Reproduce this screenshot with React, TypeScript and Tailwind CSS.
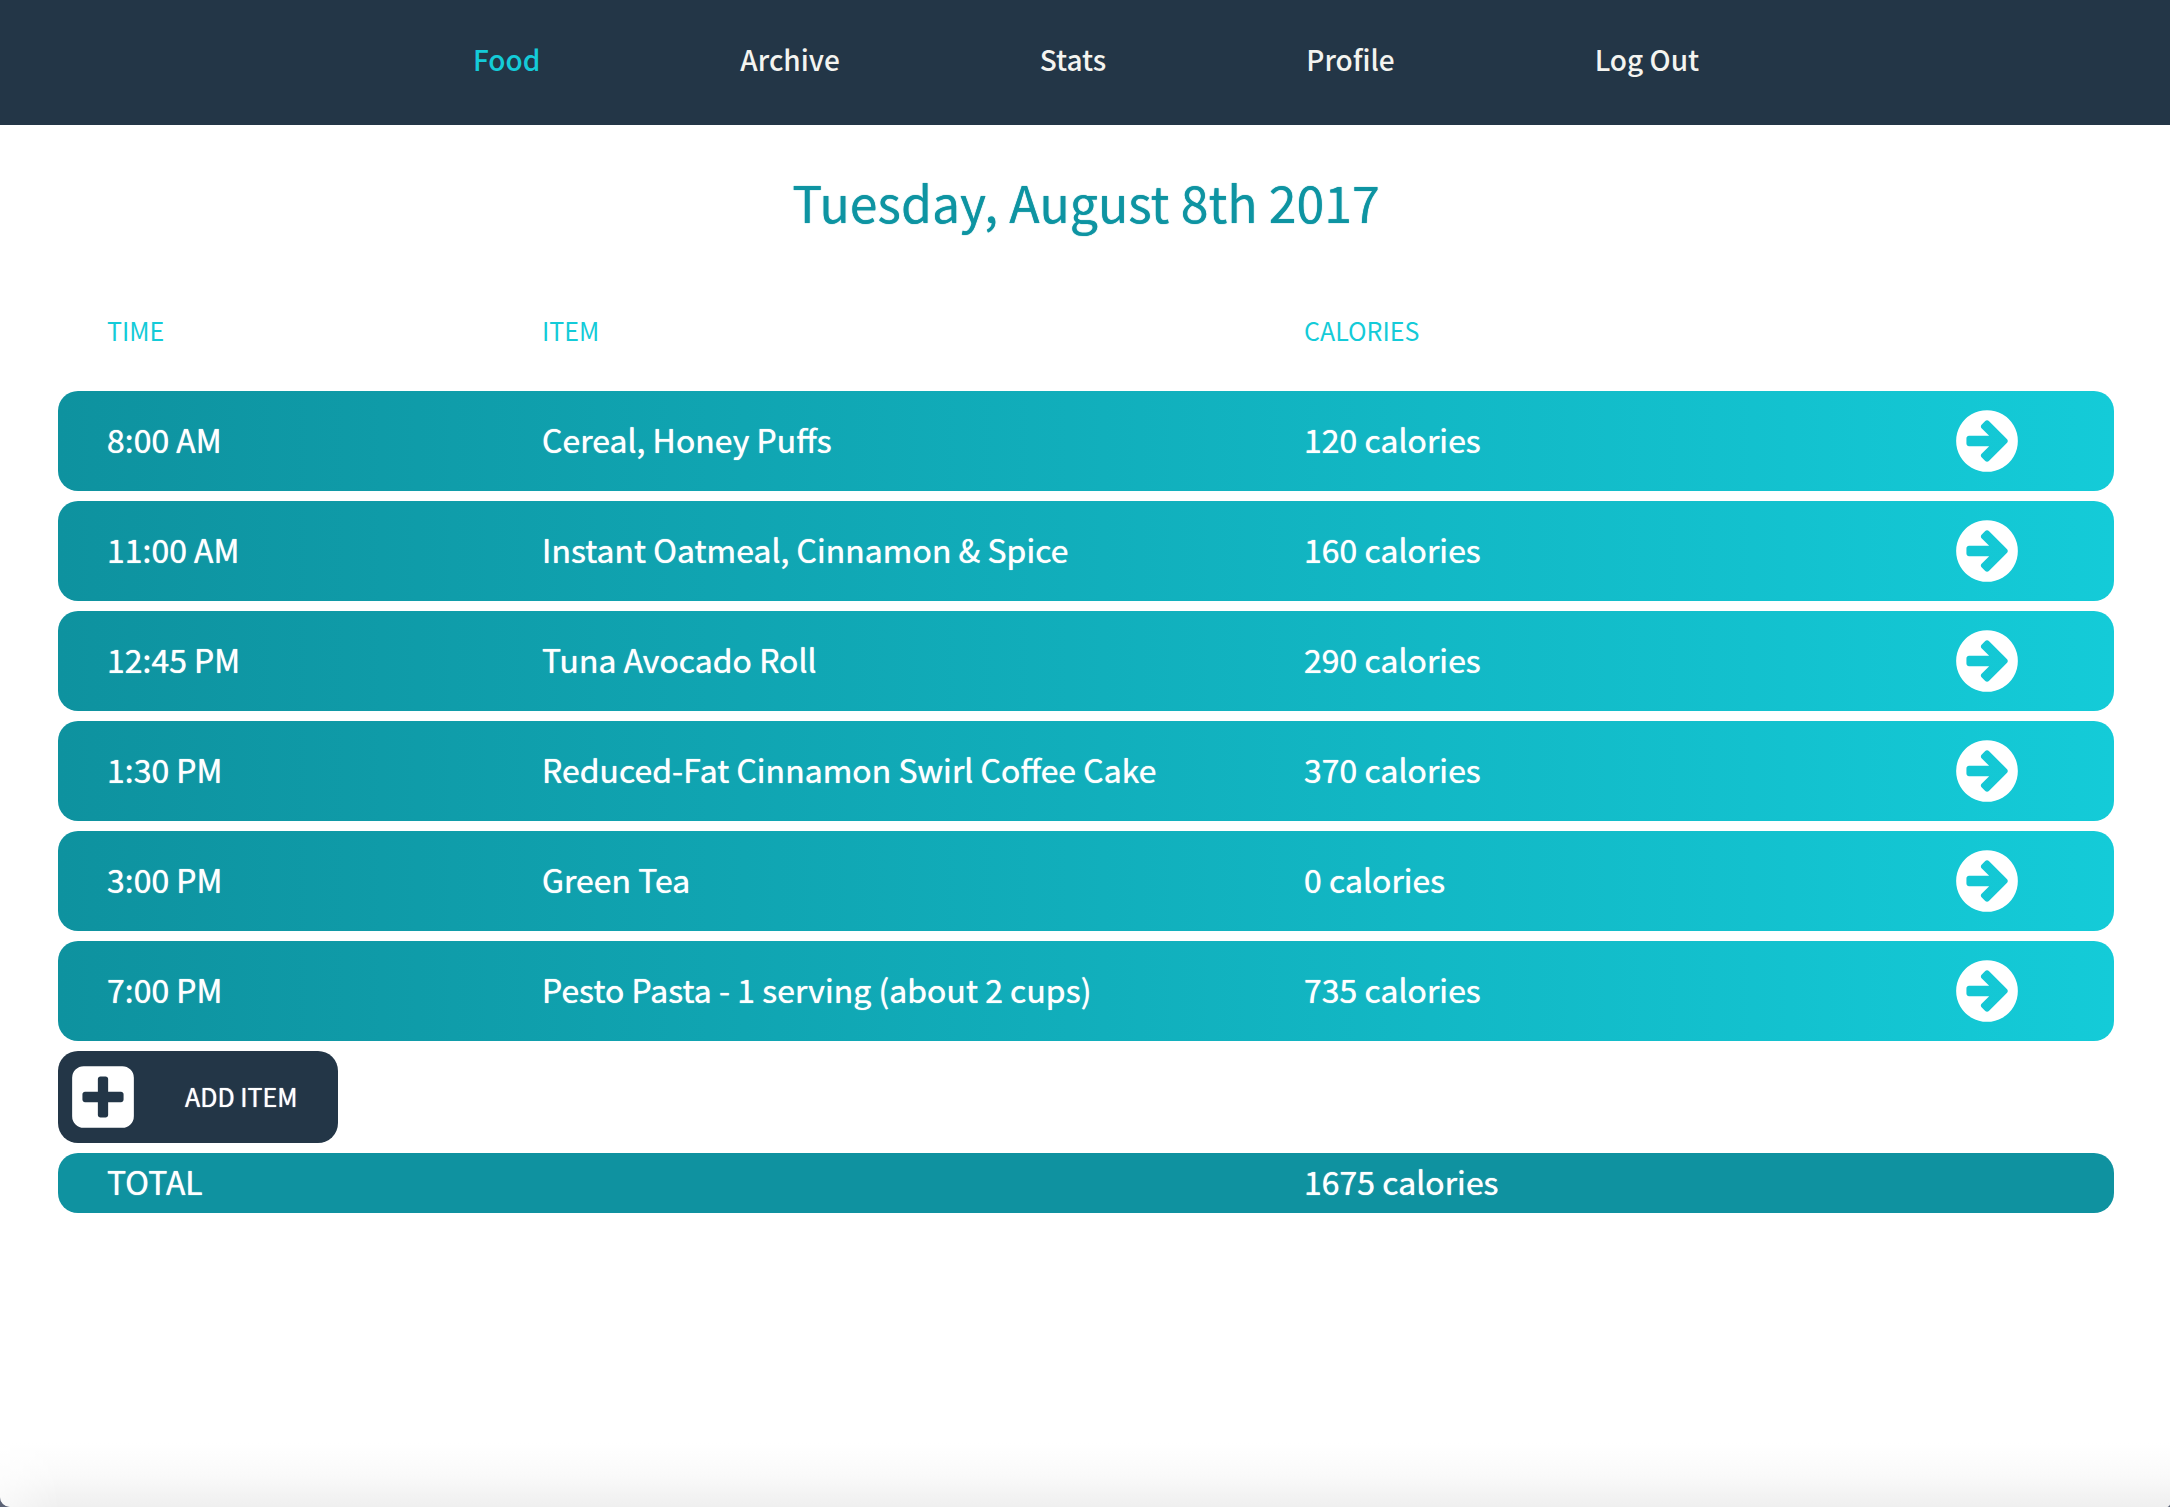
const navLinks = ['Food', 'Archive', 'Stats', 'Profile', 'Log Out'];

const entries = [
  { time: '8:00 AM', item: 'Cereal, Honey Puffs', calories: 120 },
  { time: '11:00 AM', item: 'Instant Oatmeal, Cinnamon & Spice', calories: 160 },
  { time: '12:45 PM', item: 'Tuna Avocado Roll', calories: 290 },
  { time: '1:30 PM', item: 'Reduced-Fat Cinnamon Swirl Coffee Cake', calories: 370 },
  { time: '3:00 PM', item: 'Green Tea', calories: 0 },
  { time: '7:00 PM', item: 'Pesto Pasta - 1 serving (about 2 cups)', calories: 735 },
];

const rowGrid = 'grid grid-cols-[435fr_762fr_647fr_163fr] items-center pl-[49px]';

function ArrowCircleIcon() {
  return (
    <svg viewBox="0 0 1792 1792" className="size-[72px]" fill="currentColor" aria-hidden="true">
      <path d="M1413 896q0-27-18-45l-91-91-362-362q-18-18-45-18t-45 18l-91 91q-18 18-18 45t18 45l189 189h-502q-26 0-45 19t-19 45v128q0 26 19 45t45 19h502l-189 189q-19 19-19 45t19 45l91 91q18 18 45 18t45-18l362-362 91-91q18-18 18-45zm251 0q0 209-103 385.5t-279.5 279.5-385.5 103-385.5-103-279.5-279.5-103-385.5 103-385.5 279.5-279.5 385.5-103 385.5 103 279.5 279.5 103 385.5z" />
    </svg>
  );
}

function PlusSquareIcon() {
  return (
    <svg viewBox="0 0 1792 1792" className="size-[72px]" fill="currentColor" aria-hidden="true">
      <path d="M1408 960v-128q0-26-19-45t-45-19h-320v-320q0-26-19-45t-45-19h-128q-26 0-45 19t-19 45v320h-320q-26 0-45 19t-19 45v128q0 26 19 45t45 19h320v320q0 26 19 45t45 19h128q26 0 45-19t19-45v-320h320q26 0 45-19t19-45zm256-544v960q0 119-84.5 203.5t-203.5 84.5h-960q-119 0-203.5-84.5t-84.5-203.5v-960q0-119 84.5-203.5t203.5-84.5h960q119 0 203.5 84.5t84.5 203.5z" />
    </svg>
  );
}

export default function App() {
  const total = entries.reduce((sum, entry) => sum + entry.calories, 0);

  return (
    <div className="min-h-screen bg-[#5b6275]">
      <div className="flex min-h-screen flex-col rounded-br-[4px] rounded-bl-[10px] bg-white font-['Noto_Sans_CJK_JP','Noto_Sans_CJK_SC',sans-serif] text-[32px] leading-[60px]">
        <nav className="flex h-[125px] items-center justify-center gap-[200px] bg-[#233647] pb-2 pl-0.5 text-[28px] font-medium text-[#f4f4f0]">
          {navLinks.map((label) => (
            <a key={label} href="#" className={label === 'Food' ? 'text-[#14cbd8]' : ''}>
              {label}
            </a>
          ))}
        </nav>

        <main className="flex flex-1 flex-col pr-14 pl-[58px]">
          <h1 className="mt-9 text-center text-[50px] leading-[80px] text-[#0e94a2] [text-shadow:0_0_1px_currentColor]">
            Tuesday, August 8th 2017
          </h1>

          <table className="mt-[59px] block w-full text-left text-white [text-shadow:0_0_1px_currentColor]">
            <thead className="block text-[25px] text-[#14cbd8] [text-shadow:none]">
              <tr className={rowGrid}>
                <th className="font-normal">TIME</th>
                <th className="font-normal">ITEM</th>
                <th className="font-normal">CALORIES</th>
              </tr>
            </thead>
            <tbody className="mt-[31px] flex flex-col gap-2.5">
              {entries.map((entry) => (
                <tr
                  key={entry.time}
                  className={`${rowGrid} h-[100px] rounded-[20px] bg-[linear-gradient(to_right,#0e929f,#14cbd8)]`}
                >
                  <td className="pb-1">{entry.time}</td>
                  <td className="pb-1">{entry.item}</td>
                  <td className="pb-1">{entry.calories} calories</td>
                  <td>
                    <button type="button" aria-label={`Open ${entry.item}`} className="block">
                      <ArrowCircleIcon />
                    </button>
                  </td>
                </tr>
              ))}
              <tr className="block">
                <td colSpan={4} className="block">
                  <button
                    type="button"
                    className="flex h-[92px] w-[280px] items-center gap-[46px] rounded-[20px] bg-[#233647] pl-[9px] text-[25px] [text-shadow:0_0_1px_currentColor]"
                  >
                    <PlusSquareIcon />
                    <span className="pb-0.5">ADD ITEM</span>
                  </button>
                </td>
              </tr>
            </tbody>
            <tfoot className="mt-2.5 block leading-[56px]">
              <tr className={`${rowGrid} h-[60px] rounded-[20px] bg-[#0f92a0]`}>
                <th className="pb-1 font-normal">TOTAL</th>
                <td className="col-start-3 pb-1">{total} calories</td>
              </tr>
            </tfoot>
          </table>
        </main>

        <div className="h-16 rounded-br-[4px] rounded-bl-[10px] bg-linear-to-b/srgb from-white via-[#fafafa] to-[#efefef] [mask-image:linear-gradient(to_right,#0006,black_60px)]" />
      </div>
    </div>
  );
}
